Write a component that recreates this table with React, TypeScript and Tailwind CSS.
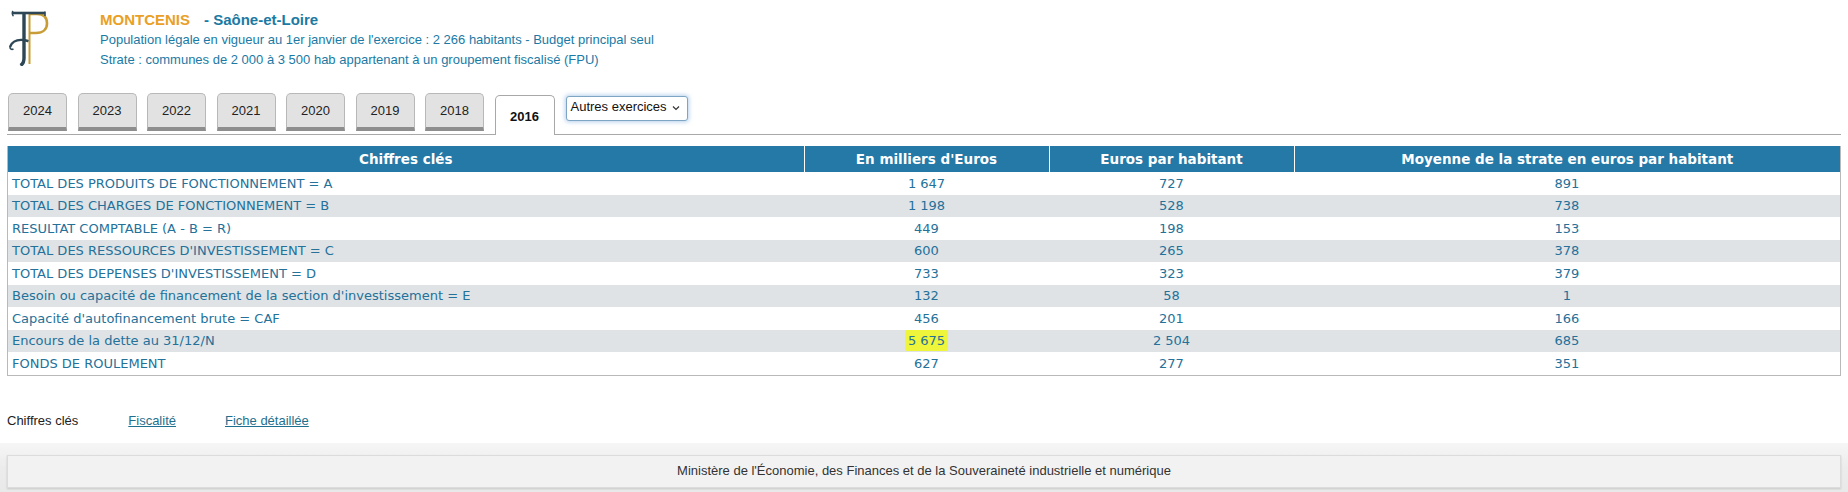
import React from "react";

const rows: [string, string, string, string][] = [
  ["TOTAL DES PRODUITS DE FONCTIONNEMENT = A", "1 647", "727", "891"],
  ["TOTAL DES CHARGES DE FONCTIONNEMENT = B", "1 198", "528", "738"],
  ["RESULTAT COMPTABLE (A - B = R)", "449", "198", "153"],
  ["TOTAL DES RESSOURCES D'INVESTISSEMENT = C", "600", "265", "378"],
  ["TOTAL DES DEPENSES D'INVESTISSEMENT = D", "733", "323", "379"],
  ["Besoin ou capacité de financement de la section d'investissement = E", "132", "58", "1"],
  ["Capacité d'autofinancement brute = CAF", "456", "201", "166"],
  ["Encours de la dette au 31/12/N", "5 675", "2 504", "685"],
  ["FONDS DE ROULEMENT", "627", "277", "351"],
];

const years = ["2024", "2023", "2022", "2021", "2020", "2019", "2018"];

function Logo() {
  return (
    <svg width="40" height="57" viewBox="0 0 40 57" fill="none">
      {/* gold P */}
      <path d="M20.5 5 V55" stroke="#c99d35" strokeWidth="2" />
      <path d="M20.5 5 H28 C35 5 38 9 38 14.5 C38 20 34 24 27 24 H21" stroke="#c99d35" strokeWidth="2.6" fill="none" />
      {/* dark F */}
      <path d="M4 4 H36" stroke="#2d4756" strokeWidth="2.6" />
      <path d="M4 2 C3 3 3 6 4.5 7 M36 2.5 V7" stroke="#2d4756" strokeWidth="1.6" fill="none" />
      <path d="M15 4 V49 C15 53 14 55 11.5 56.5" stroke="#2d4756" strokeWidth="3.4" fill="none" />
      <path d="M1 38 C3 32.5 8 30.5 14 31 C16 31.2 18 31.8 19.5 32.2" stroke="#2d4756" strokeWidth="2.4" fill="none" />
      <path d="M1 38 C1 40 2.5 41 4.5 40" stroke="#2d4756" strokeWidth="1.6" fill="none" />
    </svg>
  );
}

export default function App() {
  return (
    <div className="w-[1848px] h-[492px] bg-white overflow-hidden flex flex-col" style={{ fontFamily: '"Liberation Sans", Arial, sans-serif' }}>
      {/* Header */}
      <div className="flex pl-[9px] pt-[9px] h-[94px]">
        <div className="w-[40px] h-[57px]">
          <Logo />
        </div>
        <div className="ml-[51px] pt-[1px] flex flex-col">
          <div className="h-[20px] flex items-center font-bold text-[15px] leading-[20px]">
            <span className="text-[#e9a026]">MONTCENIS</span>
            <span className="text-[#1b7aa3] ml-[14px]">- Saône-et-Loire</span>
          </div>
          <div className="h-[20px] leading-[20px] text-[13px] text-[#1a7aa5]">
            Population légale en vigueur au 1er janvier de l'exercice : 2 266 habitants - Budget principal seul
          </div>
          <div className="h-[20px] leading-[20px] text-[13px] text-[#1a7aa5]">
            Strate : communes de 2 000 à 3 500 hab appartenant à un groupement fiscalisé (FPU)
          </div>
        </div>
      </div>

      {/* Tabs */}
      <div className="mx-[7px] flex items-end border-b border-[#a8a8a8] h-[41px] pl-[1px]">
        {years.map((y) => (
          <div
            key={y}
            className="w-[59px] h-[38px] mr-[10.5px] mb-[3px] rounded-t-[5px] border border-[#b8b8b8] border-b-[4px] border-b-[#8e8e8e] bg-[#e2e2e2] flex items-center justify-center text-[13px] text-[#222]"
          >
            {y}
          </div>
        ))}
        <div className="w-[60px] h-[40px] -mb-px rounded-t-[5px] border border-[#a8a8a8] border-b-0 bg-white flex items-center justify-center text-[13px] font-bold text-[#111] pt-[2px]">
          2016
        </div>
        <div className="self-start mt-[2px] ml-[11px] w-[122px] h-[25px] rounded-[3px] border border-[#7ea6c4] shadow-[0_0_4px_1px_rgba(120,170,220,0.55)] bg-white flex items-center justify-between pl-[4px] pr-[7px] text-[13px] text-[#111]">
          <span className="-mt-[3px]">Autres exercices</span>
          <svg width="8" height="6" viewBox="0 0 8 6" className="-mt-[1px]">
            <path d="M1 1.5 L4 4.5 L7 1.5" stroke="#333" strokeWidth="1.2" fill="none" />
          </svg>
        </div>
      </div>

      {/* Table */}
      <div className="mx-[7px] mt-[11px] border border-[#b9b9b9] border-t-0" style={{ fontFamily: '"DejaVu Sans", Verdana, sans-serif' }}>
        <table className="w-full table-fixed border-collapse">
          <colgroup>
            <col className="w-[796px]" />
            <col className="w-[245px]" />
            <col className="w-[245px]" />
            <col />
          </colgroup>
          <thead>
            <tr className="bg-[#2479a7] text-white text-[13.5px] font-bold h-[26px]">
              <th className="font-bold">Chiffres clés</th>
              <th className="font-bold border-l border-white">En milliers d'Euros</th>
              <th className="font-bold border-l border-white">Euros par habitant</th>
              <th className="font-bold border-l border-white">Moyenne de la strate en euros par habitant</th>
            </tr>
          </thead>
          <tbody>
            {rows.map((r, i) => (
              <tr key={i} className={(i % 2 === 1 ? "bg-[#dfe3e6] " : "bg-white ") + "h-[22.5px] text-[13px] text-[#24719a]"}>
                <td className="pl-[4px] text-left whitespace-nowrap">{r[0]}</td>
                <td className="text-center">
                  {i === 7 ? (
                    <span className="bg-[#eef53a] px-[3px] py-[3px] rounded-[2px]">{r[1]}</span>
                  ) : (
                    r[1]
                  )}
                </td>
                <td className="text-center">{r[2]}</td>
                <td className="text-center">{r[3]}</td>
              </tr>
            ))}
          </tbody>
        </table>
      </div>

      {/* Links */}
      <div className="mt-[35px] h-[20px] flex items-center pl-[7px] text-[13px]">
        <span className="text-[#222]">Chiffres clés</span>
        <span className="ml-[50px] text-[#1f6f8e] underline">Fiscalité</span>
        <span className="ml-[49px] text-[#1f6f8e] underline">Fiche détaillée</span>
      </div>

      {/* Footer */}
      <div className="mt-[12px] flex-1 bg-gradient-to-b from-[#f6f6f6] via-[#ececec] to-[#e9e9e9] pt-[12px] px-[7px]">
        <div className="h-[33px] bg-[#f2f2f2] border border-[#dcdcdc] shadow-[0_1px_2px_rgba(0,0,0,0.15)] flex items-center justify-center text-[13px] text-[#333]">
          Ministère de l'Économie, des Finances et de la Souveraineté industrielle et numérique
        </div>
      </div>
    </div>
  );
}
